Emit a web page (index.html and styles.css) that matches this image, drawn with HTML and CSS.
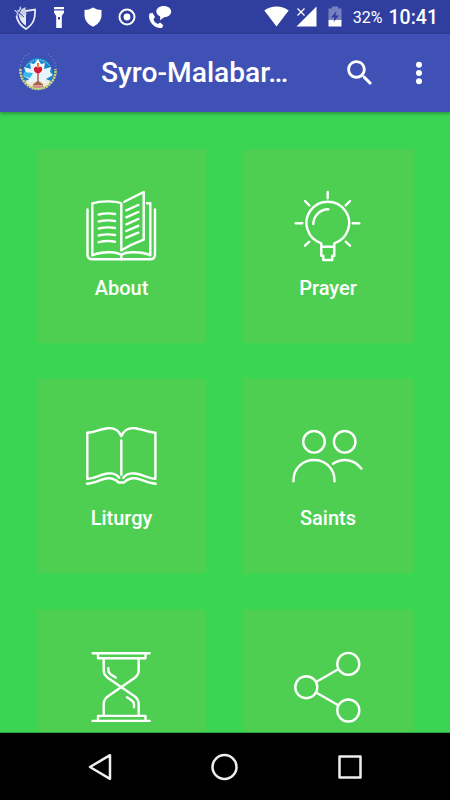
FILE: index.html
```
<!DOCTYPE html>
<html lang="en">

<head>
    <meta charset="UTF-8">
    <meta name="viewport" content="width=device-width, initial-scale=1.0">
    <title>Syro-Malabar</title>
    <link rel="stylesheet" href="styles.css">
</head>

<body>
    <div class="status-bar">
        <div class="status-left">
            <svg width="24" height="26" viewBox="0 0 24 26">
                <path d="M8 5l5 2 9-1.500c.5 9-1.500 14.500-9 19.500C7 21.500 4.500 18 3.500 12" fill="none" stroke="#e6e8f6" stroke-width="1.800"/>
                <path d="M5.500 10l7.500-1v13c-4-3-6.500-6-7.500-12z" fill="#e6e8f6"/>
                <path d="M1 6h5l1-4 2 3 4-2-1 4 2 3-4 1-1 4-3-4-3 1 1-3z" fill="#c8cdea"/>
                <path d="M3 6l8 7M10 2l-5 9" stroke="#303f9f" stroke-width=".9"/>
            </svg>
            <svg width="12" height="24" viewBox="0 0 12 24">
                <path d="M1 2h10v2.200H1zM1 5.500h10v2L8.800 11v12H3.200V11L1 7.500z" fill="#fff"/>
                <rect x="5" y="12" width="2" height="2.500" fill="#303f9f"/>
            </svg>
            <svg width="18" height="20" viewBox="0 0 18 20">
                <path d="M9 .5Q13 3 17.500 3v5c0 5.500-3.500 9.500-8.500 11.800C4 17.500.5 13.500.5 8V3Q5 3 9 .5z" fill="#fff"/>
            </svg>
            <svg width="18" height="18" viewBox="0 0 18 18">
                <circle cx="9" cy="9" r="7.500" fill="none" stroke="#fff" stroke-width="2"/>
                <circle cx="9" cy="9" r="3.400" fill="#fff"/>
            </svg>
            <svg width="24" height="24" viewBox="0 0 24 24">
                <path d="M1.500 8.500l3-.8L7 12l-1.500 2.500c1 2.500 2.300 3.700 4.500 4.500l2.200-1.500 3 2.700-1 2.500c-7 1.800-15.200-6.200-12.700-14.200z" fill="#fff"/>
                <path d="M15.700 1c4.300 0 7.500 2.400 7.500 5.600 0 3.100-3.200 5.700-7 5.700L12 15.200l.2-3.700C10 10.500 8.300 8.800 8.300 6.600c0-3.200 3.200-5.600 7.400-5.600z" fill="#fff"/>
            </svg>
        </div>
        <div class="status-right">
            <svg width="25" height="21" viewBox="0 0 25 21">
                <path d="M12.500 20.500L.3 4.500c7-5.200 17.400-5.200 24.400 0z" fill="#fff"/>
            </svg>
            <svg width="21" height="21" viewBox="0 0 21 21">
                <path d="M20.500.5v20H.5z" fill="#fff"/>
                <path d="M1.500 2.500l7 7M8.500 2.500l-7 7" stroke="#303f9f" stroke-width="4"/>
                <path d="M1.500 2.500l7 7M8.500 2.500l-7 7" stroke="#fff" stroke-width="1.300"/>
            </svg>
            <svg width="14" height="21" viewBox="0 0 14 21">
                <path d="M4 .5h6v2h3.500V14H.5V2.500H4z" fill="#7781c0"/>
                <path d="M.5 14h13v6.500H.5z" fill="#fff"/>
                <path d="M8.500 5L3 11.500h3.500L5.500 16 11 9.500H7.500z" fill="#303f9f"/>
            </svg>
            <span class="battery">32%</span>
            <span class="clock">10:41</span>
        </div>
    </div>

    <div class="app-bar">
        <svg width="40" height="40" viewBox="0 0 40 40">
            <path d="M2 16a18 18 0 0 1 36 0" fill="none" stroke="#5f78b8" stroke-width="1.500" stroke-dasharray="1.500 2"/>
            <circle cx="20" cy="20" r="15" fill="#1685c9"/>
            <path d="M8.500 12.500Q20 1 31.500 12.500" fill="none" stroke="#b9dced" stroke-width="1" stroke-dasharray="1.500 1"/>
            <path d="M7 28q13-7 26 0-4 8-13 8T7 28z" fill="#f6e5d5"/>
            <path d="M20 6l3 5 4-1-1 6 7-2-1 5 3 3-7 4 1 4-8-2-1 4-2-4-8 2 1-4-6-3 3-3-2-6 7 2-1-6 4 1z" fill="#e8f5fb"/>
            <path d="M6 19l9 1-3 5-7-2z" fill="#38b9eb"/>
            <path d="M16 15c1.500-2 3-1 4 0 1-1 3-2 4 0 1 3-2 5-4 6-2-1-5-3-4-6z" fill="#d91931"/>
            <path d="M20 10v5" stroke="#e27b3d" stroke-width="2"/>
            <path d="M20 21v7l-5 4h10l-5-4z" fill="#a5684e" stroke="#a5684e" stroke-width="1"/>
            <path d="M14 34h12" stroke="#b62c32" stroke-width="1"/>
            <path d="M2.500 16c-1 10 7 20 17.500 20s18.500-10 17.500-20" fill="none" stroke="#c3d87a" stroke-width="2.500" stroke-dasharray="2.200 .7"/>
        </svg>
        <h1>Syro-Malabar…</h1>
        <svg class="search" width="34" height="34" viewBox="0 0 24 24">
            <path d="M15.500 14h-.79l-.28-.27C15.410 12.590 16 11.110 16 9.500 16 5.910 13.090 3 9.500 3S3 5.910 3 9.500 5.910 16 9.500 16c1.610 0 3.090-.59 4.230-1.570l.27.28v.79l5 4.990L20.490 19l-4.990-5zm-6 0C7.010 14 5 11.990 5 9.500S7.010 5 9.500 5 14 7.010 14 9.500 11.990 14 9.500 14z" fill="#fff"/>
        </svg>
        <svg width="8" height="24" viewBox="0 0 8 24">
            <g fill="#fff">
                <circle cx="4" cy="3.700" r="3"/>
                <circle cx="4" cy="12" r="3"/>
                <circle cx="4" cy="20.300" r="3"/>
            </g>
        </svg>
    </div>

    <div class="content">
        <div class="card">
            <svg class="icon" viewBox="0 0 76 76">
                <path d="M3.500 21.500V66.500Q3.500 71.300 8.500 71.300H66Q71 71.300 71 66.500V21.500"/>
                <path d="M37.300 62.300V15.300C31 12.500 16 13 8.300 15.300V67.300C17 63.500 34 63 37.300 67.300V71.300M37.300 67.300C41 63 58 63.500 66.300 67.300V15.300H63"/>
                <path d="M40.300 13.700L59.700 4V51.700Q47 56.500 37.300 62.300"/>
                <path d="M14.700 26.500Q23 24.500 31 26M14.700 33.500Q23 31.500 31 33M14.700 40.500Q23 38.500 31 40M14.700 47.500Q23 45.500 31 47M14.700 54.200Q23 52.200 31 53.700"/>
                <path d="M42.300 22.300L54.300 17M42.300 29.300L54.300 24M42.300 36.300L54.300 31M42.300 43L54.300 37.800M42.300 49.700L54.300 44.700"/>
            </svg>
            <span>About</span>
        </div>
        <div class="card">
            <svg class="icon" viewBox="0 0 76 76">
                <path d="M31.300 55.300A21.300 21.300 0 1 1 44.300 55.300V67.700H42.300V72H33.300V67.700H31.300ZM31.300 58.700H44.300"/>
                <path d="M38.300 21.300A15 15 0 0 0 23.300 36"/>
                <path d="M37.700 4V10.300M5.700 35.300H12.300M62.700 35.300H69.300M15 13L19.300 17.300M60 13L55.700 17.300M15 57.700L19.300 53.700M60 57.700L55.700 53.700"/>
            </svg>
            <span>Prayer</span>
        </div>
        <div class="card">
            <svg class="icon" viewBox="0 0 76 76">
                <path d="M35.300 59.800C32.500 56 29 55 24 55.500C17 56.200 11 60.300 3.300 60.800V14.800C11 14.300 17 10.800 24 10.200C30 9.800 35 12.500 37.300 18.200C39.600 12.500 44.700 9.800 50.700 10.200C57.700 10.800 64 14.300 71.400 14.800V60.800C64 60.300 57.700 56.200 50.700 55.500C45.700 55 42 56 39.300 59.800"/>
                <path d="M37.300 22.500V56.800"/>
                <path d="M3 65.800C11 65.300 17 61 24 60.300C29 60 31.500 61.500 34.700 64.500H40C43 61.500 45.700 60 50.700 60.300C57.700 61 64 65.300 71.700 65.800"/>
            </svg>
            <span>Liturgy</span>
        </div>
        <div class="card">
            <svg class="icon" viewBox="0 0 76 76">
                <circle cx="24" cy="23.800" r="10.800"/>
                <circle cx="54.700" cy="23.800" r="10.800"/>
                <path d="M3.400 63.200C3.400 35 44.600 35 44.600 63.200M43 45.800C52 39.500 64 41 71.300 50.500"/>
            </svg>
            <span>Saints</span>
        </div>
        <div class="card">
            <svg class="icon" viewBox="0 0 76 76">
                <path d="M8.700 4.200H65.600M14 4.200V9.200H61.500V4.200M8.700 71.900H65.600M14 71.900V66.900H61.500V71.900"/>
                <path d="M19.700 9.200V21Q19.700 26 24 29L50.500 47.300Q54.700 50.300 54.700 55.500V66.900M54.700 9.200V21Q54.700 26 50.500 29L24 47.300Q19.700 50.300 19.700 55.500V66.900"/>
                <path d="M24.300 19.200V21Q24.300 23.500 26.500 25.200L31.700 28.500M43 48.200L47.500 51.300Q50 53 50 55.500V58.200"/>
            </svg>
        </div>
        <div class="card">
            <svg class="icon" viewBox="0 0 76 76">
                <circle cx="16.300" cy="38.200" r="11"/>
                <circle cx="58.300" cy="14.900" r="11"/>
                <circle cx="58.300" cy="61.500" r="11"/>
                <path d="M26.500 32.700L48.300 20.200M26.500 43.700L48.300 56.200"/>
            </svg>
        </div>
    </div>

    <div class="nav-bar">
        <svg viewBox="0 0 28 28"><path d="M4 14L24 2.200V25.800Z"/></svg>
        <svg viewBox="0 0 28 28"><circle cx="13.500" cy="14" r="12"/></svg>
        <svg viewBox="0 0 28 28"><rect x="3.500" y="3.500" width="21" height="21"/></svg>
    </div>
</body>

</html>
```

FILE: styles.css
```
* {
    box-sizing: border-box;
}
body {
    margin: 0;
    height: 800px;
    display: flex;
    flex-direction: column;
    overflow: hidden;
    background: #3bd453;
    color: #fff;
    font-family: Roboto, sans-serif;
}
svg {
    display: block;
    flex: none;
}
.status-bar {
    flex: none;
    height: 34px;
    padding: 0 12px 0 13px;
    display: flex;
    justify-content: space-between;
    align-items: center;
    background: #303f9f;
}
.status-left {
    display: flex;
    align-items: center;
    gap: 19px;
}
.status-left svg:nth-child(2) {
    margin-left: -3px;
}
.status-left svg:nth-child(4) {
    margin-left: -3.500px;
}
.status-left svg:nth-child(5) {
    margin-left: -6.500px;
}
.status-right {
    display: flex;
    align-items: center;
    gap: 8px;
}
.status-right svg {
    margin-bottom: 2px;
}
.status-right svg:nth-child(1) {
    margin-right: -1px;
}
.status-right svg:nth-child(3) {
    margin-left: 3px;
}
.battery {
    margin-left: 3px;
    margin-right: -2px;
    font-size: 16px;
}
.clock {
    font-size: 19.500px;
    font-weight: 500;
}
.app-bar {
    flex: none;
    height: 78px;
    padding: 0 27px 0 18px;
    display: flex;
    align-items: center;
    background: #3f51b5;
    box-shadow: 0 1px 4px rgba(0, 0, 0, 0.4);
    z-index: 1;
}
h1 {
    margin: 0 auto 0 43px;
    font-size: 28.200px;
    line-height: 34px;
    font-weight: 500;
}
.search {
    margin-right: 38px;
}
.content {
    flex: 1;
    min-height: 0;
    overflow: hidden;
    padding: 37px 37px 0;
    display: grid;
    grid-template-columns: 169px 170px;
    grid-auto-rows: 194px;
    gap: 36.400px 37px;
    align-content: start;
    border-bottom: 1px solid #2aa33f;
}
.card {
    padding-top: 39px;
    display: flex;
    flex-direction: column;
    align-items: center;
    background: #4ecf52;
    font-size: 20px;
    line-height: 24px;
    font-weight: 500;
}
.icon {
    width: 76px;
    height: 76px;
    margin-bottom: 11.500px;
    fill: none;
    stroke: #fff;
    stroke-width: 2.400;
    stroke-linecap: round;
    stroke-linejoin: round;
}
.nav-bar {
    flex: none;
    height: 67px;
    padding: 0 86px;
    display: flex;
    justify-content: space-between;
    align-items: center;
    background: #000;
}
.nav-bar svg {
    width: 28px;
    height: 28px;
    fill: none;
    stroke: #eee;
    stroke-width: 2.500;
    stroke-linejoin: round;
}
```
